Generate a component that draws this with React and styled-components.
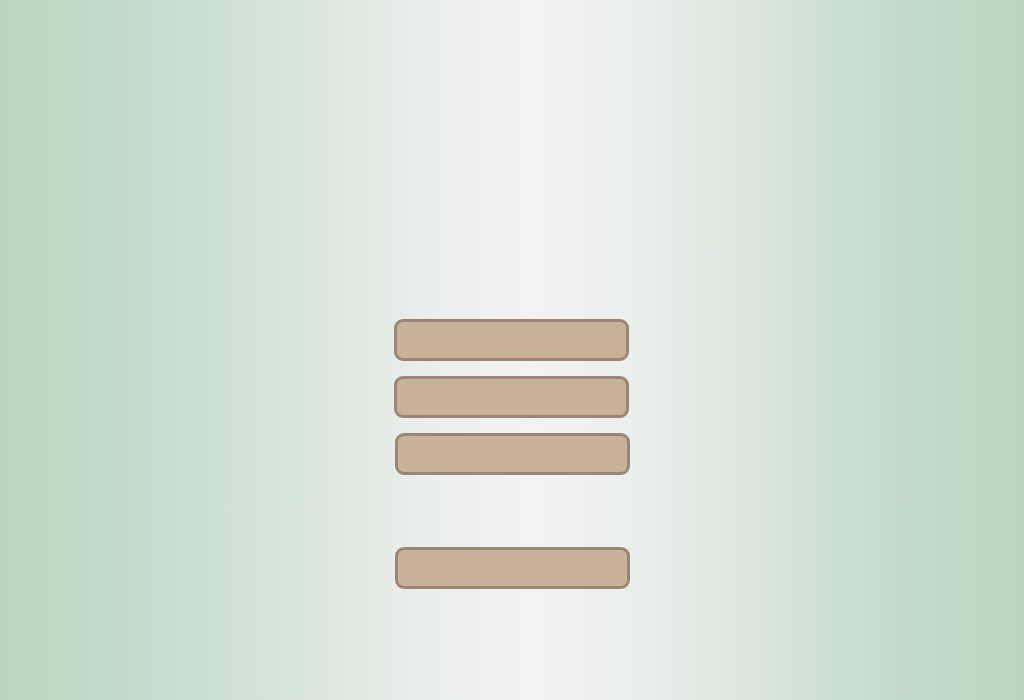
import React from 'react';
import styled, { createGlobalStyle } from 'styled-components';

const GlobalStyle = createGlobalStyle`
  html, body {
    margin: 0;
    padding: 0;
    height: 100%;
  }
  body {
    font-family: "Liberation Sans", Arial, sans-serif;
  }
  #root {
    height: 100%;
  }
`;

const Page = styled.div`
  box-sizing: border-box;
  min-height: 700px;
  height: 100%;
  padding: 319px 1px 0 0;
  display: flex;
  justify-content: center;
  background: linear-gradient(
    to right,
    #bbd6be 0%,
    #c3dacb 12%,
    #d9e5dd 30%,
    #ebefec 42%,
    #f2f2f2 52%,
    #ebefec 62%,
    #d9e5dd 74%,
    #c3dacb 88%,
    #bbd6be 100%
  );
`;

const Menu = styled.div`
  display: flex;
  flex-direction: column;
  gap: 15px;
  width: 235px;
`;

const MenuButton = styled.div`
  box-sizing: border-box;
  height: 42px;
  width: 235px;
  margin-left: ${({ shift }) => (shift ? '1px' : '0')};
  background: #c8b29a;
  border: 3px solid #9a8676;
  border-radius: 9px;
`;

const Spacer = styled.div`
  height: 42px;
`;

export default function App() {
  return (
    <>
      <GlobalStyle />
      <Page>
        <Menu>
          <MenuButton />
          <MenuButton />
          <MenuButton shift />
          <Spacer />
          <MenuButton shift />
        </Menu>
      </Page>
    </>
  );
}
